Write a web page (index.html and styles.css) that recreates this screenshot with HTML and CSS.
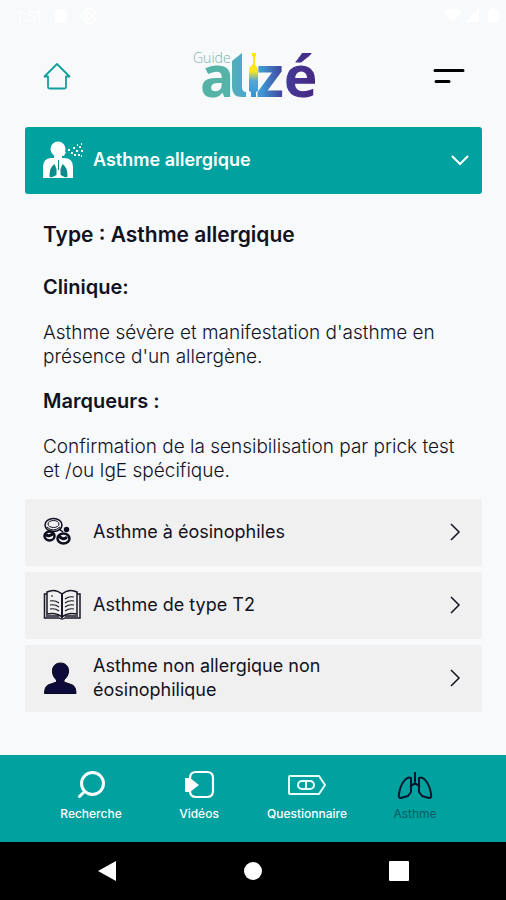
FILE: index.html
```html
<!DOCTYPE html>
<html lang="fr">
<head>
<meta charset="utf-8">
<meta name="viewport" content="width=device-width, initial-scale=1">
<title>Guide Alizé</title>
<link rel="stylesheet" href="styles.css">
</head>
<body>
<div class="app">
  <div class="status">
    <span class="status-time">1:51</span>
    <svg width="14" height="16" viewBox="0 0 14 16" aria-hidden="true"><path d="M3 1h8l2 3v11H1V4z" fill="#fff"/></svg>
    <svg width="18" height="18" viewBox="0 0 18 18" fill="none" stroke="#fff" stroke-width="2" aria-hidden="true"><circle cx="9" cy="9" r="7"/><circle cx="9" cy="9" r="3"/></svg>
    <span class="spacer"></span>
    <svg width="54" height="18" viewBox="0 0 54 18" fill="#fff" aria-hidden="true"><path d="M0 5Q9-2 18 5L9 15zM21 15 35 1v14zM44 3h3V1h4v2h3v12H44z"/></svg>
  </div>
  <header class="header">
    <a class="icon-link" href="#" aria-label="Accueil">
      <svg width="28" height="28" viewBox="0 0 28 28" fill="none" stroke="#12a09c" stroke-width="1.8" stroke-linejoin="round" stroke-linecap="round" aria-hidden="true"><path d="M14 2 1.500 14.500H5V25q0 1.500 1.500 1.500h15q1.500 0 1.500-1.500V14.500h3.500z"/></svg>
    </a>
    <svg class="logo" width="124" height="76" viewBox="0 -12 124 76" role="img" aria-label="Guide Alizé">
      <defs>
        <linearGradient id="word" gradientUnits="userSpaceOnUse" x1="10" y1="0" x2="122" y2="0"><stop offset="0" stop-color="#55b3a5"/><stop offset=".24" stop-color="#55b3a9"/><stop offset=".4" stop-color="#4ba6d4"/><stop offset=".54" stop-color="#3f98d5"/><stop offset=".7" stop-color="#4150a4"/><stop offset=".8" stop-color="#453795"/><stop offset="1" stop-color="#452a85"/></linearGradient>
        <linearGradient id="vial" x1="0" y1="0" x2="0" y2="1"><stop offset="0" stop-color="#ffe600"/><stop offset=".42" stop-color="#f7e520"/><stop offset=".62" stop-color="#57a8d6"/><stop offset="1" stop-color="#3593d3"/></linearGradient>
      </defs>
      <text class="logo-guide" x="2" y="13">Guide</text>
      <text class="logo-word" x="9" y="47" fill="url(#word)">a</text>
      <path d="M41 11 51 3V37q0 5 4 5v5h-4q-10 0-10-10z" fill="url(#word)"/>
      <path d="M61 3h4v3l-1 1v7l1 2q2 1 2 4v21l-2 1v5h-5v-5l-2-1V20q0-3 2-4l2-2V7l-1-1z" fill="url(#vial)"/>
      <text class="logo-word" x="65" y="47" fill="url(#word)">zé</text>
    </svg>
    <button class="menu" type="button" aria-label="Menu">
      <svg width="32" height="16" viewBox="0 0 32 16" stroke="#000" stroke-width="3" stroke-linecap="round" aria-hidden="true"><path d="M2 2.500h28M3 13.500h13"/></svg>
    </button>
  </header>
  <main class="content">
    <button class="item item-open" type="button" aria-expanded="true">
      <svg class="item-icon" width="40" height="40" viewBox="0 0 40 40" fill="#fff" aria-hidden="true">
        <circle cx="15" cy="9" r="7.500"/><path d="M11 13h8v7h-8zM18 10l5 2-2 4-4-1z"/><path d="M0 38V27q0-9 9-9h12q9 0 9 9v11z"/>
        <path d="M13.500 22v7l-2-5q-5 3-5 12 0 2 3 1l4-2v-6M17.500 22v7l2-5q5 3 5 12 0 2-3 1l-4-2v-6" fill="#078d8b"/><path d="M15.500 20v10" stroke="#078d8b"/>
        <path d="M25 9h2v2h-2zM28 12h2v2h-2zM30 7h2v2h-2zM33 10h2v2h-2zM36 6h2v2h-2zM38 10h2v2h-2zM31 14h2v2h-2zM35 14h2v2h-2zM38 15h1v2h-1zM38 3h1v2h-1zM34 4h1v2h-1z"/>
      </svg>
      <span class="item-label">Asthme allergique</span>
      <svg class="chevron" width="20" height="20" viewBox="0 0 20 20" aria-hidden="true"><path d="m2 6 8 8 8-8"/></svg>
    </button>
    <section class="details">
      <h1>Type : Asthme allergique</h1>
      <h2>Clinique:</h2>
      <p>Asthme sévère et manifestation d'asthme en présence d'un allergène.</p>
      <h2>Marqueurs :</h2>
      <p>Confirmation de la sensibilisation par prick test et /ou IgE spécifique.</p>
    </section>
    <div class="list">
      <button class="item" type="button">
        <svg class="item-icon" width="40" height="40" viewBox="0 0 40 40" fill="none" stroke="#0d0d20" stroke-width="1.500" aria-hidden="true">
          <ellipse cx="10.500" cy="13" rx="8.500" ry="6.500"/><ellipse cx="10.500" cy="12" rx="5.500" ry="3.500" stroke-width="1"/><path d="M4 15q6 6 13 0" stroke-width="1"/>
          <ellipse cx="6.500" cy="24" rx="5" ry="4.500" stroke-width="2.500"/><path d="M3 22q2 4 8-1" stroke-width="3"/>
          <ellipse cx="20.500" cy="26.500" rx="6" ry="5" stroke-width="2.500"/><path d="M16 24q4 5 8 1" stroke-width="3"/><circle cx="23.500" cy="17.500" r="2" fill="#0d0d20"/><path d="m16 17 4 3"/>
        </svg>
        <span class="item-label">Asthme à éosinophiles</span>
        <svg class="chevron" width="20" height="20" viewBox="0 0 20 20" aria-hidden="true"><path d="m6 2 8 8-8 8"/></svg>
      </button>
      <button class="item" type="button">
        <svg class="item-icon" width="40" height="40" viewBox="0 0 40 40" fill="none" stroke="#171725" stroke-width="1.500" aria-hidden="true">
          <path d="M19 9Q12 3 4 7v22q9-2 15 3 6-5 15-3V7q-8-4-15 2z"/><path d="M19 9v24" stroke-width="2"/><path d="M4 9H1.500v24H16q3 2 6 0h15V9H34M3 31h13M22 31h13"/><path d="M7 16q5-1 9 2M7 20q5-1 9 2M7 24q5-1 9 2M22 14q4-3 9-2M22 18q4-3 9-2M22 22q4-3 9-2M22 26q4-3 9-2M8 11h2" stroke-width="1.200"/>
        </svg>
        <span class="item-label">Asthme de type T2</span>
        <svg class="chevron" width="20" height="20" viewBox="0 0 20 20" aria-hidden="true"><path d="m6 2 8 8-8 8"/></svg>
      </button>
      <button class="item" type="button">
        <svg class="item-icon" width="40" height="40" viewBox="0 0 40 40" fill="#0c0b3a" stroke="#08081c" aria-hidden="true"><path d="M17.500 5C12 5 9 9 9.500 14c.3 4 2 6 4 8v2L5 27q-3.500 2-3.500 8.500h31.500q0-6.500-3.500-8.500l-8.500-3v-2c2-2 4-4 4.500-8 .500-5-2.500-9-8-9z"/></svg>
        <span class="item-label">Asthme non allergique non éosinophilique</span>
        <svg class="chevron" width="20" height="20" viewBox="0 0 20 20" aria-hidden="true"><path d="m6 2 8 8-8 8"/></svg>
      </button>
    </div>
  </main>
  <nav class="tabs">
    <a class="tab" href="#">
      <svg width="40" height="32" viewBox="0 0 40 32" fill="none" stroke="#fff" stroke-width="3" stroke-linecap="round" aria-hidden="true"><circle cx="21.500" cy="14.500" r="11"/><path d="m13.500 22.500-5 5"/></svg>
      Recherche
    </a>
    <a class="tab" href="#">
      <svg width="40" height="32" viewBox="0 0 40 32" fill="none" stroke="#fff" stroke-width="2.200" aria-hidden="true"><path d="M11 10V9q0-6 6-6h11q6 0 6 6v13q0 6-6 6H17q-6 0-6-6v-1"/><path d="M6 9h5l9 7-9 7H6z" fill="#fff" stroke="none"/></svg>
      Vidéos
    </a>
    <a class="tab" href="#">
      <svg width="40" height="32" viewBox="0 0 40 32" fill="none" stroke="#e6ffff" stroke-width="2" stroke-linejoin="round" aria-hidden="true"><path d="M3 7h29l6 9-6 9H3q-1 0-1-1V8q0-1 1-1z"/><rect x="11" y="12" width="16" height="8" rx="4"/><path d="M19 12v8"/></svg>
      Questionnaire
    </a>
    <a class="tab tab-current" href="#" aria-current="page">
      <svg width="40" height="32" viewBox="0 0 40 32" fill="none" stroke="#07152c" stroke-width="2" stroke-linejoin="round" aria-hidden="true"><path d="M20 3v12M20 14l-5 4M20 14l5 4M16 9v14l-3 4-7 2q-3 0-2-4 1-8 5-13 4-5 7-3zM24 9v14l3 4 7 2q3 0 2-4-1-8-5-13-4-5-7-3z"/></svg>
      Asthme
    </a>
  </nav>
  <div class="system">
    <button type="button" aria-label="Retour"><svg width="22" height="22" viewBox="0 0 22 22" fill="#fff" aria-hidden="true"><path d="M2 11 20 1v20z"/></svg></button>
    <button type="button" aria-label="Écran d'accueil"><svg width="22" height="22" viewBox="0 0 22 22" fill="#fff" aria-hidden="true"><circle cx="11" cy="11" r="9"/></svg></button>
    <button type="button" aria-label="Applications récentes"><svg width="22" height="22" viewBox="0 0 22 22" fill="#fff" aria-hidden="true"><rect x="1" y="1" width="20" height="20" rx="1"/></svg></button>
  </div>
</div>
</body>
</html>
```
FILE: styles.css
```css
* { box-sizing: border-box; }
body { margin: 0; background: #f7f9fb; color: #12121f; font-family: Inter, "Liberation Sans", sans-serif; }
button { font: inherit; color: inherit; border: 0; background: none; padding: 0; cursor: pointer; }
a { color: inherit; text-decoration: none; }
svg { display: block; flex: none; }

.app { min-height: 100vh; display: flex; flex-direction: column; }

.status { display: flex; align-items: center; gap: 12px; height: 32px; padding: 0 8px 0 16px; color: #fff; font-size: 15px; }
.spacer { flex: 1; }

.header { display: grid; grid-template-columns: 1fr auto 1fr; align-items: center; height: 88px; padding: 0 40px; }
.icon-link { justify-self: start; padding: 0 3px; }
.menu { justify-self: end; padding: 0 1px; }
.logo { overflow: visible; }
.logo-guide { font: 300 14px "Open Sans", sans-serif; fill: #7bb5ac; }
.logo-word { font: 700 57px "Open Sans", sans-serif; }

.content { flex: 1; padding: 7px 24px 24px 25px; }
.item { display: flex; align-items: center; width: 100%; min-height: 67px; padding: 7px 12px 9px 18px; border-radius: 3px; background: #f0f0f0; text-align: left; font-size: 18px; line-height: 24px; }
.item-label { flex: 1; padding: 0 80px 0 10px; }
.item-open { background: #00a19f; color: #fff; font-weight: 600; }
.item-open .item-label { padding-right: 10px; }
.chevron { fill: none; stroke: #12121f; stroke-width: 1.5; margin-right: 5px; }
.item-open .chevron { stroke: #fff; stroke-width: 2; margin-right: 0; }

.details { padding: 29px 18px 16px 18px; }
.details h1 { margin: 0 0 28px; font-size: 21px; line-height: 24px; font-weight: 600; }
.details h2 { margin: 0 0 22px; font-size: 20px; line-height: 24px; font-weight: 600; }
.details p { margin: 0; font-size: 19px; line-height: 24px; font-weight: 300; }
.details p + h2 { margin-top: 20px; }
.list { display: flex; flex-direction: column; gap: 6px; }

.tabs { display: grid; grid-template-columns: repeat(4, 108px); justify-content: center; height: 87px; padding-top: 14px; background: #00a19f; color: #fff; }
.tab { display: flex; flex-direction: column; align-items: center; gap: 5px; font-size: 12px; line-height: 16px; font-weight: 500; }
.tab-current { color: #075a66; font-weight: 400; }

.system { display: flex; justify-content: center; align-items: center; gap: 124px; height: 58px; background: #000; }
```
